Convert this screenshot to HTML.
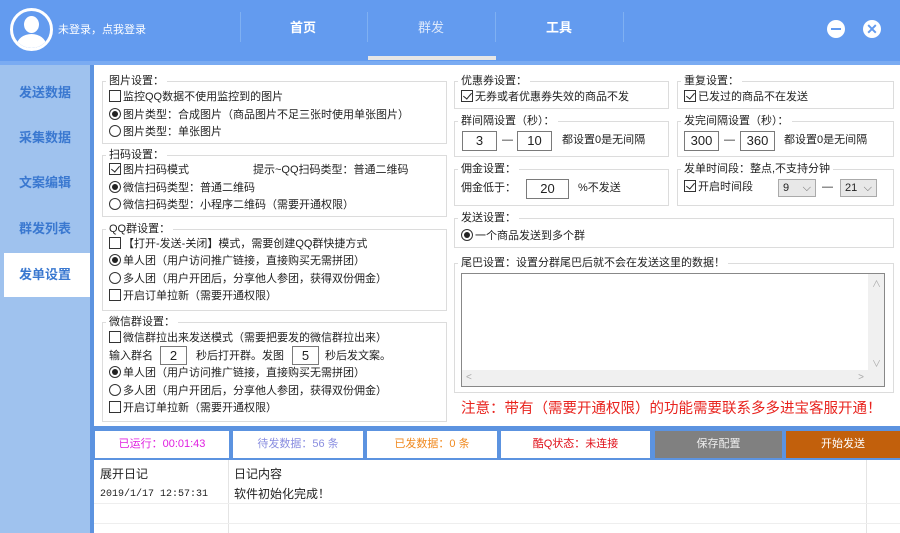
<!DOCTYPE html>
<html><head><meta charset="utf-8"><style>
*{margin:0;padding:0;box-sizing:border-box}
body{width:900px;height:533px;position:relative;overflow:hidden;background:#fff;font-family:"Liberation Sans","Noto Sans CJK SC",sans-serif;font-size:11px;color:#222}
.a{position:absolute;white-space:nowrap;line-height:14px}
.g{position:absolute;border:1px solid #dcdcdc}
.gt{position:absolute;background:#fff;padding:0 3px;line-height:14px;white-space:nowrap}
.cb{display:inline-block;width:12px;height:12px;border:1px solid #333;vertical-align:-2px;margin-right:2px;position:relative;background:#fff}
.cb.k::after{content:"";position:absolute;left:3px;top:0px;width:4px;height:7px;border:solid #222;border-width:0 1.3px 1.3px 0;transform:rotate(40deg)}
.rb{display:inline-block;width:12px;height:12px;border:1px solid #333;border-radius:50%;vertical-align:-2px;margin-right:2px;position:relative;background:#fff}
.rb.k::after{content:"";position:absolute;left:2px;top:2px;width:6px;height:6px;border-radius:50%;background:#222}
.in{position:absolute;border:1px solid #7a7a7a;background:#fff;text-align:center;line-height:17px;font-size:13px}
.sel{position:absolute;border:1px solid #aaa;background:#e8e8e8;font-size:11px;line-height:16px;padding-left:4px}
.side{position:absolute;left:0;width:90px;text-align:center;color:#3a78d0;font-weight:bold;font-size:13px;line-height:44px}
.bc{position:absolute;top:431px;height:27px;line-height:27px;text-align:center;font-size:11px;background:#fff}
</style></head><body>
<!-- header -->
<div style="position:absolute;left:0;top:0;width:900px;height:61px;background:#639bef"></div>
<div style="position:absolute;left:0;top:61px;width:900px;height:4px;background:#7aabf2"></div>
<div style="position:absolute;left:368px;top:56px;width:128px;height:4px;background:#e6e6e6"></div>
<div style="position:absolute;left:10px;top:8px;width:43px;height:43px;border:3px solid #fff;border-radius:50%;overflow:hidden;background:#639bef">
<div style="position:absolute;left:11px;top:5px;width:15px;height:17px;border-radius:50%;background:#fff"></div>
<div style="position:absolute;left:4px;top:23px;width:29px;height:22px;border-radius:50% 50% 0 0;background:#fff"></div></div>
<div class="a" style="left:58px;top:23px;color:#fff;font-size:11px">未登录，点我登录</div>
<div style="position:absolute;left:240px;top:12px;width:1px;height:30px;background:#7fb0f2"></div>
<div style="position:absolute;left:367px;top:12px;width:1px;height:30px;background:#7fb0f2"></div>
<div style="position:absolute;left:495px;top:12px;width:1px;height:30px;background:#7fb0f2"></div>
<div style="position:absolute;left:623px;top:12px;width:1px;height:30px;background:#7fb0f2"></div>
<div class="a" style="left:290px;top:21px;color:#fff;font-weight:bold;font-size:13px">首页</div>
<div class="a" style="left:418px;top:21px;color:#dce8fb;font-size:13px">群发</div>
<div class="a" style="left:546px;top:21px;color:#fff;font-weight:bold;font-size:13px">工具</div>
<div style="position:absolute;left:827px;top:20px;width:18px;height:18px;border-radius:50%;background:#fff"><div style="position:absolute;left:4px;top:8px;width:10px;height:2px;background:#639bef"></div></div>
<div style="position:absolute;left:863px;top:20px;width:18px;height:18px;border-radius:50%;background:#fff;color:#639bef;text-align:center;line-height:18px;font-size:14px;font-weight:bold">✕</div>
<!-- sidebar -->
<div style="position:absolute;left:0;top:65px;width:90px;height:468px;background:#9fc2ee"></div>
<div style="position:absolute;left:90px;top:65px;width:4px;height:468px;background:#5c93e0"></div>
<div style="position:absolute;left:94px;top:426px;width:806px;height:34px;background:#5c93e0"></div>
<div style="position:absolute;left:4px;top:253px;width:86px;height:44px;background:#fff"></div>
<div class="side" style="top:71px">发送数据</div>
<div class="side" style="top:116px">采集数据</div>
<div class="side" style="top:161px">文案编辑</div>
<div class="side" style="top:207px">群发列表</div>
<div class="side" style="top:253px">发单设置</div>
<!-- left groups -->
<div class="g" style="left:102px;top:81px;width:345px;height:63px"></div>
<div class="gt" style="left:106px;top:74px">图片设置：</div>
<div class="a" style="left:109px;top:90px"><span class="cb"></span>监控QQ数据不使用监控到的图片</div>
<div class="a" style="left:109px;top:108px"><span class="rb k"></span>图片类型：合成图片（商品图片不足三张时使用单张图片）</div>
<div class="a" style="left:109px;top:125px"><span class="rb"></span>图片类型：单张图片</div>

<div class="g" style="left:102px;top:155px;width:345px;height:62px"></div>
<div class="gt" style="left:106px;top:148px">扫码设置：</div>
<div class="a" style="left:109px;top:163px"><span class="cb k"></span>图片扫码模式</div>
<div class="a" style="left:253px;top:163px">提示~QQ扫码类型：普通二维码</div>
<div class="a" style="left:109px;top:181px"><span class="rb k"></span>微信扫码类型：普通二维码</div>
<div class="a" style="left:109px;top:198px"><span class="rb"></span>微信扫码类型：小程序二维码（需要开通权限）</div>

<div class="g" style="left:102px;top:229px;width:345px;height:82px"></div>
<div class="gt" style="left:106px;top:222px">QQ群设置：</div>
<div class="a" style="left:109px;top:237px"><span class="cb"></span>【打开-发送-关闭】模式，需要创建QQ群快捷方式</div>
<div class="a" style="left:109px;top:254px"><span class="rb k"></span>单人团（用户访问推广链接，直接购买无需拼团）</div>
<div class="a" style="left:109px;top:272px"><span class="rb"></span>多人团（用户开团后，分享他人参团，获得双份佣金）</div>
<div class="a" style="left:109px;top:289px"><span class="cb"></span>开启订单拉新（需要开通权限）</div>

<div class="g" style="left:102px;top:322px;width:345px;height:100px"></div>
<div class="gt" style="left:106px;top:315px">微信群设置：</div>
<div class="a" style="left:109px;top:331px"><span class="cb"></span>微信群拉出来发送模式（需要把要发的微信群拉出来）</div>
<div class="a" style="left:109px;top:349px">输入群名</div>
<div class="in" style="left:160px;top:346px;width:27px;height:19px">2</div>
<div class="a" style="left:196px;top:349px">秒后打开群。发图</div>
<div class="in" style="left:292px;top:346px;width:27px;height:19px">5</div>
<div class="a" style="left:325px;top:349px">秒后发文案。</div>
<div class="a" style="left:109px;top:366px"><span class="rb k"></span>单人团（用户访问推广链接，直接购买无需拼团）</div>
<div class="a" style="left:109px;top:384px"><span class="rb"></span>多人团（用户开团后，分享他人参团，获得双份佣金）</div>
<div class="a" style="left:109px;top:401px"><span class="cb"></span>开启订单拉新（需要开通权限）</div>
<!-- right groups -->
<div class="g" style="left:454px;top:81px;width:215px;height:28px"></div>
<div class="gt" style="left:458px;top:74px">优惠券设置：</div>
<div class="a" style="left:461px;top:90px"><span class="cb k"></span>无券或者优惠券失效的商品不发</div>
<div class="g" style="left:677px;top:81px;width:217px;height:28px"></div>
<div class="gt" style="left:681px;top:74px">重复设置：</div>
<div class="a" style="left:684px;top:90px"><span class="cb k"></span>已发过的商品不在发送</div>

<div class="g" style="left:454px;top:121px;width:215px;height:36px"></div>
<div class="gt" style="left:458px;top:114px">群间隔设置（秒）：</div>
<div class="in" style="left:462px;top:131px;width:35px;height:20px">3</div>
<div class="a" style="left:502px;top:133px">—</div>
<div class="in" style="left:517px;top:131px;width:35px;height:20px">10</div>
<div class="a" style="left:562px;top:133px">都设置0是无间隔</div>
<div class="g" style="left:677px;top:121px;width:217px;height:36px"></div>
<div class="gt" style="left:681px;top:114px">发完间隔设置（秒）：</div>
<div class="in" style="left:684px;top:131px;width:35px;height:20px">300</div>
<div class="a" style="left:724px;top:133px">—</div>
<div class="in" style="left:740px;top:131px;width:35px;height:20px">360</div>
<div class="a" style="left:784px;top:133px">都设置0是无间隔</div>

<div class="g" style="left:454px;top:169px;width:215px;height:37px"></div>
<div class="gt" style="left:458px;top:162px">佣金设置：</div>
<div class="a" style="left:461px;top:181px">佣金低于：</div>
<div class="in" style="left:526px;top:179px;width:43px;height:20px">20</div>
<div class="a" style="left:578px;top:181px">%不发送</div>
<div class="g" style="left:677px;top:169px;width:217px;height:37px"></div>
<div class="gt" style="left:681px;top:162px">发单时间段：整点,不支持分钟</div>
<div class="a" style="left:684px;top:180px"><span class="cb k"></span>开启时间段</div>
<div class="sel" style="left:778px;top:179px;width:38px;height:18px">9 <span style="float:right;margin-right:4px;color:#666">⌵</span></div>
<div class="a" style="left:822px;top:180px">—</div>
<div class="sel" style="left:840px;top:179px;width:37px;height:18px">21 <span style="float:right;margin-right:4px;color:#666">⌵</span></div>

<div class="g" style="left:454px;top:218px;width:440px;height:30px"></div>
<div class="gt" style="left:458px;top:211px">发送设置：</div>
<div class="a" style="left:461px;top:229px"><span class="rb k"></span>一个商品发送到多个群</div>

<div class="g" style="left:454px;top:263px;width:440px;height:130px"></div>
<div class="gt" style="left:458px;top:256px">尾巴设置：设置分群尾巴后就不会在发送这里的数据！</div>
<div style="position:absolute;left:461px;top:273px;width:424px;height:114px;border:1px solid #888;background:#fff">
<div style="position:absolute;right:0;top:0;width:16px;height:97px;background:#f0f0f0"></div>
<div style="position:absolute;left:0;bottom:0;width:100%;height:16px;background:#f0f0f0"></div>
<div class="a" style="right:3px;top:3px;color:#aaa;font-size:9px">∧</div>
<div class="a" style="right:3px;top:83px;color:#aaa;font-size:9px">∨</div>
<div class="a" style="left:4px;bottom:1px;color:#aaa;font-size:10px">&lt;</div>
<div class="a" style="right:20px;bottom:1px;color:#aaa;font-size:10px">&gt;</div></div>
<div class="a" style="left:461px;top:401px;color:#e8231e;font-size:14.5px;line-height:16px">注意：带有（需要开通权限）的功能需要联系多多进宝客服开通！</div>
<!-- bottom bar -->
<div class="bc" style="left:95px;width:134px;color:#e020e0">已运行：00:01:43</div>
<div class="bc" style="left:233px;width:130px;color:#8a8ee0">待发数据：56 条</div>
<div class="bc" style="left:367px;width:130px;color:#f08a20">已发数据：0 条</div>
<div class="bc" style="left:501px;width:149px;color:#e0101a">酷Q状态：未连接</div>
<div class="bc" style="left:655px;width:127px;background:#808080;color:#eee">保存配置</div>
<div class="bc" style="left:786px;width:114px;background:#c2600c;color:#fff">开始发送</div>
<!-- log -->
<div style="position:absolute;left:228px;top:460px;width:1px;height:73px;background:#e4e4e4"></div>
<div style="position:absolute;left:866px;top:460px;width:1px;height:73px;background:#e4e4e4"></div>
<div style="position:absolute;left:94px;top:503px;width:806px;height:1px;background:#eee"></div>
<div style="position:absolute;left:94px;top:523px;width:806px;height:1px;background:#eee"></div>
<div class="a" style="left:100px;top:467px;font-size:12px">展开日记</div>
<div class="a" style="left:234px;top:467px;font-size:12px">日记内容</div>
<div class="a" style="left:100px;top:488px;font-family:'Liberation Mono',monospace;font-size:10px">2019/1/17 12:57:31</div>
<div class="a" style="left:234px;top:487px;font-size:12px">软件初始化完成！</div>
</body></html>
